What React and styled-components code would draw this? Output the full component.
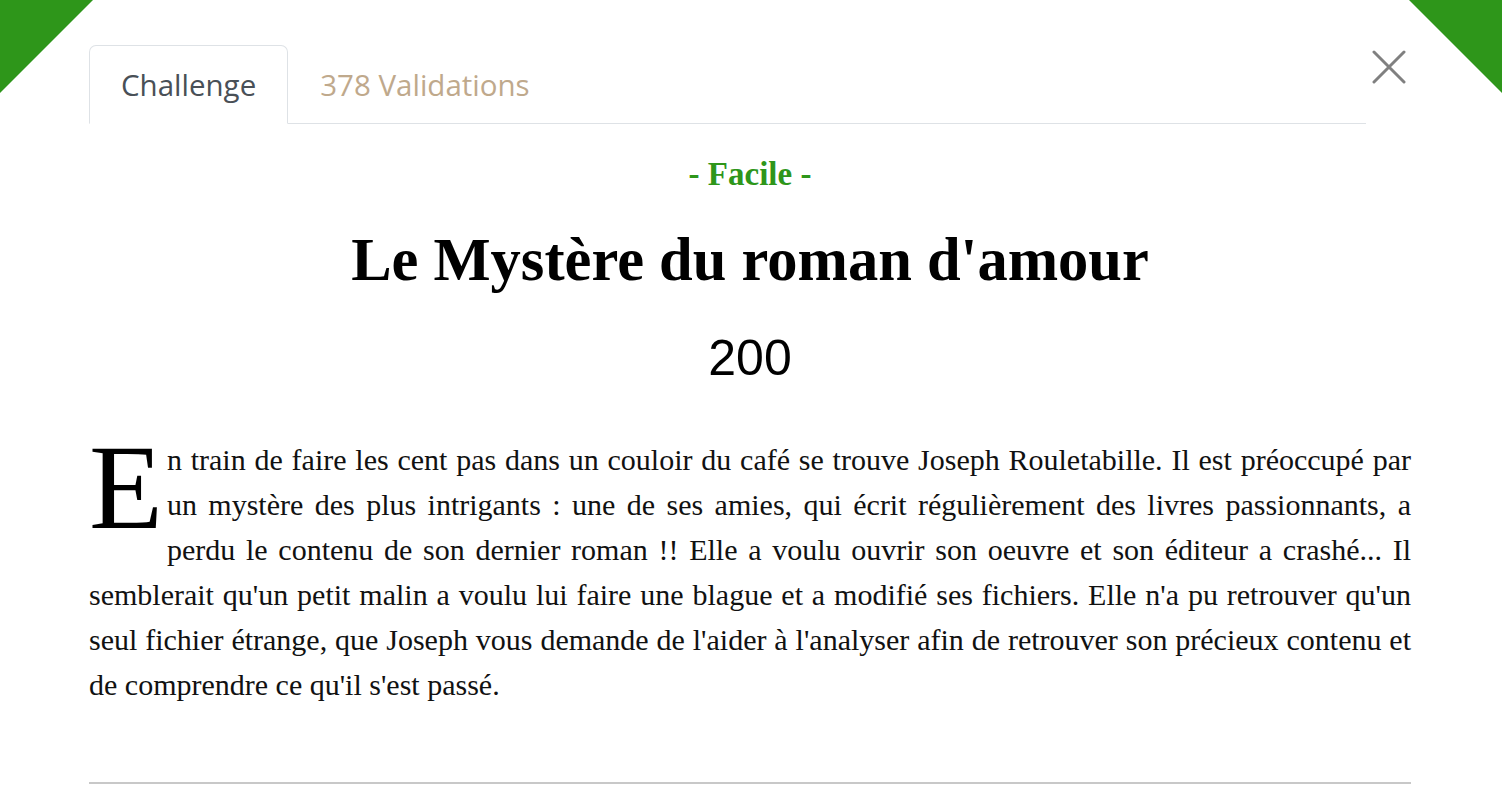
import React from "react";
import styled, { createGlobalStyle } from "styled-components";

const GlobalStyle = createGlobalStyle`
  html, body {
    margin: 0;
    padding: 0;
    background: #ffffff;
  }
  * {
    box-sizing: border-box;
  }
`;

const App = () => {
  return (
    <>
      <GlobalStyle />
      <Modal>
        <Corner side="left" />
        <Corner side="right" />
        <Header>
          <Tabs>
            <Tab active>Challenge</Tab>
            <Tab>378 Validations</Tab>
          </Tabs>
          <CloseBtn aria-label="Fermer">
            <svg width="34" height="34" viewBox="0 0 34 34">
              <path
                d="M2 2 L32 32 M32 2 L2 32"
                stroke="#808080"
                strokeWidth="3"
                strokeLinecap="round"
              />
            </svg>
          </CloseBtn>
        </Header>
        <Content>
          <Level>- Facile -</Level>
          <Title>Le Mystère du roman d'amour</Title>
          <Points>200</Points>
          <Story>
            <DropCap>E</DropCap>n train de faire les cent pas dans un couloir du
            café se trouve Joseph Rouletabille. Il est préoccupé par un mystère
            des plus intrigants : une de ses amies, qui écrit régulièrement des
            livres passionnants, a perdu le contenu de son dernier roman !! Elle
            a voulu ouvrir son oeuvre et son éditeur a crashé... Il semblerait
            qu'un petit malin a voulu lui faire une blague et a modifié ses
            fichiers. Elle n'a pu retrouver qu'un seul fichier étrange, que
            Joseph vous demande de l'aider à l'analyser afin de retrouver son
            précieux contenu et de comprendre ce qu'il s'est passé.
          </Story>
          <Divider />
        </Content>
      </Modal>
    </>
  );
};

export default App;

const Modal = styled.div`
  position: relative;
  width: 1502px;
  height: 788px;
  overflow: hidden;
  padding: 45px 91px 0 89px;
  background: #ffffff;
`;

const Corner = styled.div`
  position: absolute;
  top: 0;
  ${(p) => (p.side === "left" ? "left: 0;" : "right: 0;")}
  width: 93px;
  height: 93px;
  background: #2e961a;
  clip-path: ${(p) =>
    p.side === "left"
      ? "polygon(0 0, 100% 0, 0 100%)"
      : "polygon(0 0, 100% 0, 100% 100%)"};
`;

const Header = styled.div`
  display: flex;
  align-items: flex-start;
`;

const Tabs = styled.div`
  flex: 1;
  display: flex;
  border-bottom: 1px solid #dee2e6;
`;

const Tab = styled.div`
  font-family: "Open Sans", "Noto Sans", sans-serif;
  font-size: 29.5px;
  line-height: 40px;
  padding: 19px 31px 18px;
  margin-bottom: -1px;
  border: 1px solid ${(p) => (p.active ? "#dee2e6" : "transparent")};
  border-bottom-color: ${(p) => (p.active ? "#ffffff" : "transparent")};
  border-radius: 7px 7px 0 0;
  background: ${(p) => (p.active ? "#ffffff" : "transparent")};
  color: ${(p) => (p.active ? "#495057" : "#bfa98c")};
`;

const CloseBtn = styled.button`
  width: 45px;
  display: flex;
  justify-content: center;
  padding: 5px 0 0 0;
  margin-left: 0;
  border: none;
  background: none;
  cursor: pointer;
`;

const Content = styled.div`
  display: flex;
  flex-direction: column;
  align-items: center;
`;

const Level = styled.div`
  margin-top: 31px;
  font-family: "Liberation Serif", "Times New Roman", serif;
  font-weight: bold;
  font-size: 33px;
  line-height: 38px;
  color: #2e961a;
`;

const Title = styled.h1`
  margin: 33px 0 0;
  font-family: "Liberation Serif", "Times New Roman", serif;
  font-weight: bold;
  font-size: 60.5px;
  line-height: 68px;
  color: #000000;
`;

const Points = styled.div`
  margin-top: 34px;
  font-family: "Liberation Sans", Arial, sans-serif;
  font-size: 50px;
  line-height: 60px;
  color: #000000;
`;

const Story = styled.p`
  align-self: stretch;
  margin: 49px 0 0;
  font-family: "Liberation Serif", "Times New Roman", serif;
  font-size: 30px;
  line-height: 45px;
  text-align: justify;
  color: #111111;
`;

const DropCap = styled.span`
  float: left;
  font-size: 121px;
  line-height: 100px;
  height: 92px;
  margin: 0 4px 0 0;
  color: #000000;
`;

const Divider = styled.hr`
  align-self: stretch;
  margin: 75px 0 0;
  border: none;
  border-top: 2px solid #c8c8c8;
`;
